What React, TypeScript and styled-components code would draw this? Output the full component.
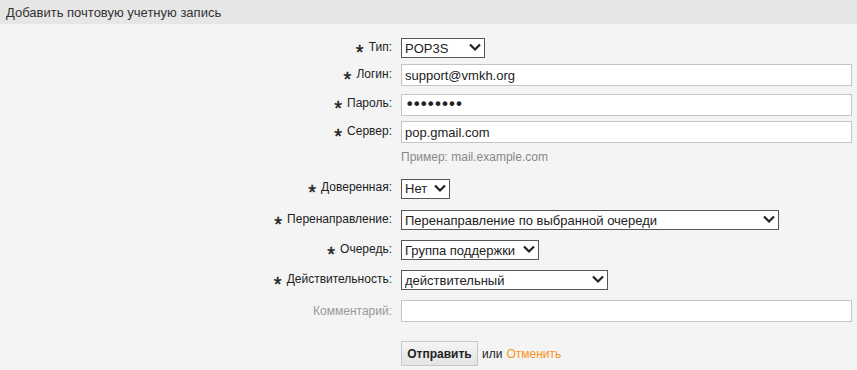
import styled, { createGlobalStyle } from 'styled-components';

const GlobalStyle = createGlobalStyle`
  html, body {
    margin: 0;
    padding: 0;
    background: #f4f4f4;
    font-family: 'Liberation Sans', Arial, sans-serif;
    overflow: hidden;
  }
`;

const StyledPage = styled.div`
  width: 857px;
  height: 370px;
  background: #f4f4f4;
  color: #222;
  overflow: hidden;
`;

const Header = styled.div`
  height: 24px;
  background: #e6e6e6;
  display: flex;
  align-items: center;
  padding-left: 6px;
  font-size: 13px;
  color: #333;
`;

const Form = styled.div`
  display: flex;
  flex-direction: column;
  padding-top: 10px;
`;

const Row = styled.div<{ $h: number }>`
  display: flex;
  align-items: center;
  height: ${(p) => p.$h}px;
`;

const Label = styled.label<{ $muted?: boolean }>`
  width: 392px;
  text-align: right;
  font-size: 12px;
  color: ${(p) => (p.$muted ? '#999' : '#222')};
  padding-right: 9px;
  white-space: nowrap;
`;

const Marker = styled.span`
  display: inline-block;
  font-size: 20px;
  vertical-align: -8px;
  margin-right: 5px;
  line-height: 10px;
  -webkit-text-stroke: 0.4px #222;
`;

const TextInput = styled.input<{ $secret?: boolean }>`
  box-sizing: border-box;
  width: 451px;
  height: 22px;
  border: 1px solid #c4c4c4;
  background: #fff;
  padding: 0 3px;
  font-family: ${(p) => (p.$secret ? "'DejaVu Sans', sans-serif" : "'Liberation Sans', Arial, sans-serif")};
  font-size: ${(p) => (p.$secret ? '16px' : '13px')};
  letter-spacing: ${(p) => (p.$secret ? '-2.4px' : 'normal')};
  color: #222;
  outline: none;
`;

const SelectWrap = styled.div<{ $w: number }>`
  position: relative;
  width: ${(p) => p.$w}px;
  height: 20px;
`;

const Select = styled.select`
  appearance: none;
  box-sizing: border-box;
  width: 100%;
  height: 100%;
  border: 1px solid #555;
  border-radius: 0;
  background: #fff;
  padding: 0 18px 0 3px;
  font-family: 'Liberation Sans', Arial, sans-serif;
  font-size: 13px;
  color: #222;
  outline: none;
`;

const Chevron = styled.svg`
  position: absolute;
  right: 4px;
  top: 5px;
  pointer-events: none;
`;

const Hint = styled.div`
  margin-left: 401px;
  font-size: 12px;
  color: #888;
`;

const Actions = styled.div`
  display: flex;
  align-items: center;
  gap: 4px;
  margin-left: 401px;
  font-size: 12px;
  color: #222;
`;

const SubmitButton = styled.button`
  box-sizing: border-box;
  width: 77px;
  height: 25px;
  border: 1px solid #c8c8c8;
  background: linear-gradient(#f4f4f4, #e4e4e4);
  font-family: 'Liberation Sans', Arial, sans-serif;
  font-size: 12px;
  font-weight: bold;
  color: #222;
  padding: 0;
`;

const CancelLink = styled.a`
  color: #f7931e;
  text-decoration: none;
  cursor: pointer;
`;

function DropDown({ width, value, options }: { width: number; value: string; options: string[] }) {
  return (
    <SelectWrap $w={width}>
      <Select defaultValue={value}>
        {options.map((o) => (
          <option key={o}>{o}</option>
        ))}
      </Select>
      <Chevron width='12' height='9' viewBox='0 0 12 9'>
        <path d='M1 1.5 L6 6.5 L11 1.5' fill='none' stroke='#222' strokeWidth='2.2' />
      </Chevron>
    </SelectWrap>
  );
}

function Required({ children }: { children: string }) {
  return (
    <Label>
      <Marker>*</Marker>
      {children}
    </Label>
  );
}

export default function App() {
  return (
    <StyledPage>
      <GlobalStyle />
      <Header>Добавить почтовую учетную запись</Header>
      <Form>
        <Row $h={28}>
          <Required>Тип:</Required>
          <DropDown width={84} value='POP3S' options={['POP3', 'POP3S', 'IMAP', 'IMAPS']} />
        </Row>
        <Row $h={26}>
          <Required>Логин:</Required>
          <TextInput defaultValue='support@vmkh.org' />
        </Row>
        <Row $h={33}>
          <Required>Пароль:</Required>
          <TextInput $secret type='password' defaultValue='password' />
        </Row>
        <Row $h={22}>
          <Required>Сервер:</Required>
          <TextInput defaultValue='pop.gmail.com' />
        </Row>
        <Row $h={28}>
          <Hint>Пример: mail.example.com</Hint>
        </Row>
        <Row $h={35}>
          <Required>Доверенная:</Required>
          <DropDown width={49} value='Нет' options={['Нет', 'Да']} />
        </Row>
        <Row $h={28}>
          <Required>Перенаправление:</Required>
          <DropDown
            width={378}
            value='Перенаправление по выбранной очереди'
            options={['Перенаправление по выбранной очереди', 'Перенаправление по фильтру']}
          />
        </Row>
        <Row $h={32}>
          <Required>Очередь:</Required>
          <DropDown width={138} value='Группа поддержки' options={['Группа поддержки']} />
        </Row>
        <Row $h={28}>
          <Required>Действительность:</Required>
          <DropDown width={207} value='действительный' options={['действительный', 'недействительный']} />
        </Row>
        <Row $h={33}>
          <Label $muted>Комментарий:</Label>
          <TextInput />
        </Row>
        <Row $h={53}>
          <Actions>
            <SubmitButton>Отправить</SubmitButton>
            <span>или</span>
            <CancelLink>Отменить</CancelLink>
          </Actions>
        </Row>
      </Form>
    </StyledPage>
  );
}
